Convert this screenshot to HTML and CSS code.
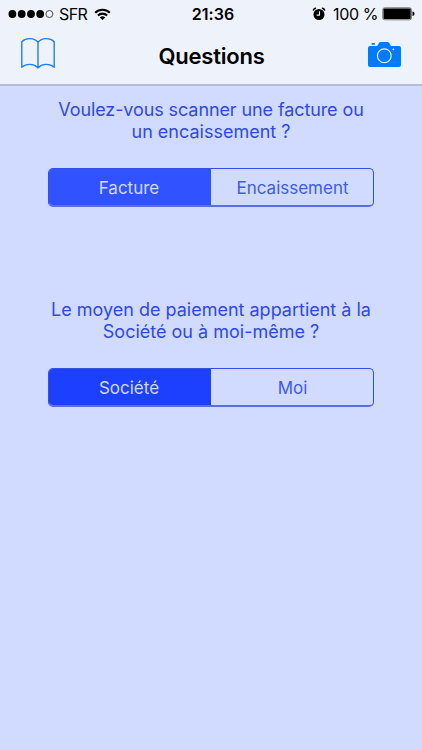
FILE: index.html
```html
<!DOCTYPE html>
<html lang="fr">
<head>
<meta charset="utf-8">
<title>Questions</title>
<link rel="stylesheet" href="styles.css">
</head>
<body>
<header class="header">
  <div class="status">
    <div class="status-left">
      <svg class="signal" width="46" height="10" viewBox="0 0 46 10"><g fill="#000"><circle cx="4.4" cy="5" r="3.9"/><circle cx="13.7" cy="5" r="3.9"/><circle cx="23" cy="5" r="3.9"/><circle cx="32.2" cy="5" r="3.9"/></g><circle cx="41.4" cy="5" r="3.5" fill="none" stroke="#222" stroke-width=".8"/></svg>
      <span class="carrier">SFR</span>
      <svg class="wifi" width="17" height="13" viewBox="0 0 17 13"><g fill="none" stroke="#000" stroke-width="2.1"><path d="M1.2 4.7a10.5 10.5 0 0 1 14.6 0"/><path d="M3.9 7.5a6.7 6.7 0 0 1 9.2 0"/></g><path d="M5.8 9.4a4 4 0 0 1 5.4 0L8.5 12.1z"/></svg>
    </div>
    <span class="clock">21:36</span>
    <div class="status-right">
      <svg class="alarm" width="14" height="14" viewBox="0 0 14 14"><circle cx="7" cy="7.5" r="5.5"/><path d="M1.3 3.6a2.8 2.8 0 0 1 2.8-2.3M12.7 3.6a2.8 2.8 0 0 0-2.8-2.3" fill="none" stroke="#000" stroke-width="1.5"/><path d="M7.5 4.2v3.9H4.6" fill="none" stroke="#eef2fb" stroke-width="1.1"/></svg>
      <span class="percent">100 %</span>
      <svg class="battery" width="34" height="14" viewBox="0 0 34 14"><rect x=".8" y=".8" width="28.6" height="12" rx="1.8" fill="#eef2fb" stroke="#555" stroke-width=".8"/><rect x="1.5" y="1.5" width="27.2" height="10.6" rx=".8"/><path d="M30.5 4.5c1.4.3 2 1.2 2 2.3s-.6 2-2 2.3z"/></svg>
    </div>
  </div>
  <nav class="nav">
    <svg class="book" width="36" height="34" viewBox="0 0 36 34" fill="none" stroke="#2180ed" stroke-width="1.4" stroke-linejoin="round"><path d="M18 5.2C14.2.8 6.2.3 1.8 4.7V30.2C6 26.2 14 26.6 17.2 30.2Q18 31.7 18.8 30.2C22 26.6 30 26.2 34.2 30.2V4.7C29.8.3 21.8.8 18 5.2zV31"/></svg>
    <h1 class="title">Questions</h1>
    <svg class="camera" width="34" height="28" viewBox="0 0 34 28"><path fill="#007aff" d="M3 5h6.3c1 0 1.5-.6 2-1.8.6-1.5 1.2-2.2 2.5-2.2h6.6c1.3 0 1.9.7 2.5 2.2.5 1.2 1 1.8 2 1.8H32q2 0 2 2v17q0 2-2 2H3q-2 0-2-2V7q0-2 2-2z"/><rect x="4.5" y="2" width="3.5" height="1.8" rx=".7" fill="#007aff"/><circle cx="17.3" cy="14.7" r="6.9" fill="none" stroke="#e1edff" stroke-width="1.2"/><circle cx="26.4" cy="8.3" r=".9" fill="#e1edff"/></svg>
  </nav>
</header>
<main>
  <section class="question">
    <p class="prompt"><span class="line tight">Voulez-vous scanner une facture ou</span><span class="line">un encaissement ?</span></p>
    <div class="segments">
      <button class="segment selected">Facture</button>
      <button class="segment">Encaissement</button>
    </div>
  </section>
  <section class="question second">
    <p class="prompt"><span class="line">Le moyen de paiement appartient à la</span><span class="line">Société ou à moi-même ?</span></p>
    <div class="segments">
      <button class="segment selected">Société</button>
      <button class="segment">Moi</button>
    </div>
  </section>
</main>
</body>
</html>
```
FILE: styles.css
```css
* { box-sizing: border-box; }
body {
  margin: 0;
  height: 750px;
  background: #d1dbff;
  font-family: Inter, "Liberation Sans", sans-serif;
}
svg { display: block; flex: none; }
.header {
  height: 86px;
  background: #eef2fb;
  border-bottom: 2px solid #b3bbd8;
}
.status {
  height: 28px;
  display: grid;
  grid-template-columns: 1fr auto 1fr;
  align-items: center;
  padding: 0 8px;
  color: #000;
  font-size: 16px;
  line-height: 28px;
}
.status-left, .status-right { display: flex; align-items: center; }
.status-right { justify-content: flex-end; }
.carrier { margin-left: 5px; letter-spacing: -.6px; }
.wifi { margin-left: 7px; }
.clock { padding-left: 4px; font-weight: 600; letter-spacing: .1px; }
.alarm { margin-top: -1px; }
.percent { margin: 0 4px 0 7px; letter-spacing: -.4px; white-space: nowrap; }
.battery { margin-right: -2px; }
.nav {
  height: 56px;
  display: grid;
  grid-template-columns: 36px 1fr 34px;
  align-items: center;
  padding: 0 21px 0 20px;
}
.book { margin-top: -4px; }
.camera { margin-top: -2px; }
.title {
  margin: 0;
  text-align: center;
  font-size: 22px;
  font-weight: 600;
  line-height: 55px;
  letter-spacing: -.2px;
}
.question { height: 200px; padding: 13px 48px 0; }
.prompt {
  margin: 0 -20px 25px;
  color: #2f49e6;
  font-size: 18px;
  line-height: 22px;
  text-align: center;
}
.line { display: block; white-space: nowrap; }
.tight { letter-spacing: -.1px; }
.segments {
  height: 39px;
  display: grid;
  grid-template-columns: 162px 1fr;
  border: 1px solid #3450e2;
  border-bottom: 2px solid #5a70dc;
  border-radius: 5px;
  overflow: hidden;
}
.segment {
  border: 0;
  padding: 2px 0 0 1px;
  background: none;
  color: #405be6;
  font: 17px Inter, "Liberation Sans", sans-serif;
}
.selected { padding: 2px 2px 0 0; background: #3053ff; color: #d1dbff; }
.second .selected { background: #1d40ff; }
```
